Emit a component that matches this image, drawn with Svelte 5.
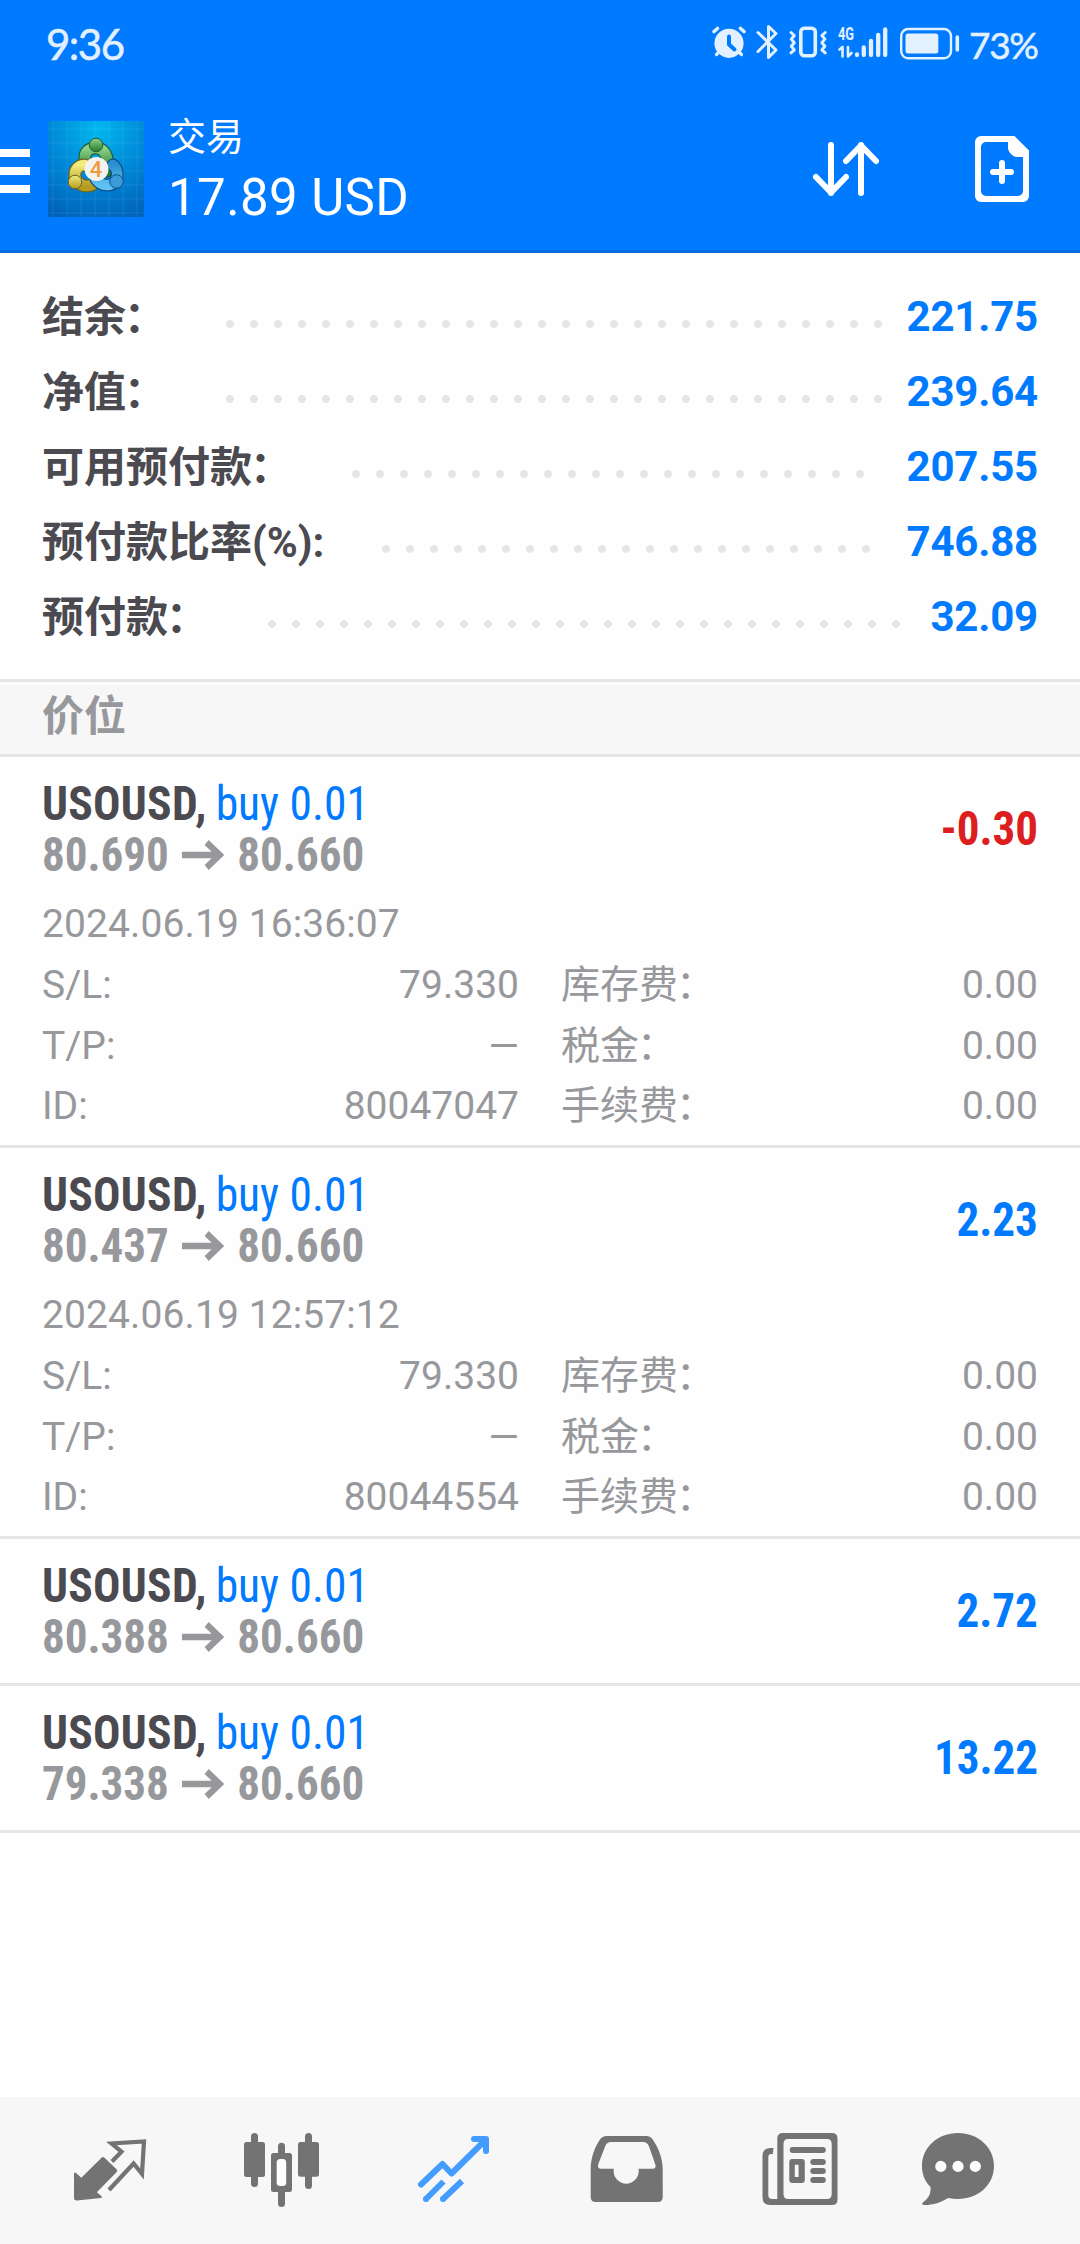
<script>
  const account = { title: "交易", total: "17.89 USD" };

  const summary = [
    { label: "结余", colon: "：", value: "221.75", dots: 28 },
    { label: "净值", colon: "：", value: "239.64", dots: 28 },
    { label: "可用预付款", colon: "：", value: "207.55", dots: 22 },
    { label: "预付款比率(%):", value: "746.88", dots: 21 },
    { label: "预付款", colon: "：", value: "32.09", dots: 27 },
  ];

  const positions = [
    {
      symbol: "USOUSD",
      side: "buy 0.01",
      open: "80.690",
      current: "80.660",
      profit: "-0.30",
      time: "2024.06.19 16:36:07",
      id: "80047047",
    },
    {
      symbol: "USOUSD",
      side: "buy 0.01",
      open: "80.437",
      current: "80.660",
      profit: "2.23",
      time: "2024.06.19 12:57:12",
      id: "80044554",
    },
    {
      symbol: "USOUSD",
      side: "buy 0.01",
      open: "80.388",
      current: "80.660",
      profit: "2.72",
    },
    {
      symbol: "USOUSD",
      side: "buy 0.01",
      open: "79.338",
      current: "80.660",
      profit: "13.22",
    },
  ];

  function details(position) {
    return [
      ["S/L:", "79.330", "库存费", "0.00"],
      ["T/P:", "—", "税金", "0.00"],
      ["ID:", position.id, "手续费", "0.00"],
    ];
  }
</script>

<main class="screen">
  <header class="header">
    <div class="status">
      <span class="clock">9:36</span>
      <svg class="status-icons" width="250" height="40" viewBox="711 24 250 40">
        <g fill="none" stroke="#e2f0ff" stroke-width="3.2" stroke-linecap="round" stroke-linejoin="round">
          <circle cx="729" cy="43.3" r="14.6" fill="#e2f0ff" stroke="none" />
          <path d="M714 31.5l3.500-3M744 31.5l-3.500-3" stroke-width="3.6" />
          <path d="M716.500 54.500l3-3M741.500 54.500l-3-3" />
          <path d="M729 36.500v8l5.500 5" stroke="#007aff" stroke-width="4" />
          <path d="M758 32.500l18 17.500-7.500 7.500v-31l7.500 7L758 51.500" stroke-width="3" />
          <rect x="800.800" y="28.200" width="14.500" height="27.600" rx="3.500" stroke-width="3.6" />
          <path d="M791 32.500l3.300 3-3 3.600 3 3.600-3 3.600 3 3.600-3.300 3M825.200 32.500l-3.300 3 3 3.600-3 3.600 3 3.600-3 3.600 3.300 3" stroke-width="3" />
          <path d="M839.500 49.500l3-2.500v9.500M848 47v9.500l3.500-3.500" stroke-width="2.600" />
          <path d="M857 54.500v.5M863.800 47.500v7.500M871 41v14M878.200 35v20M885.200 29.500v25.500" stroke-width="4.300" />
          <rect x="901.200" y="29" width="49.800" height="29.300" rx="7" stroke-width="2.400" />
          <rect x="905.500" y="33.500" width="32.800" height="20" rx="2.500" fill="#e2f0ff" stroke="none" />
          <path d="M957.300 37v13" stroke-width="3.600" />
        </g>
        <text class="network" x="838" y="40" textLength="16" lengthAdjust="spacingAndGlyphs">4G</text>
      </svg>
      <span class="battery">73%</span>
    </div>

    <div class="toolbar">
      <svg class="menu" width="30" height="44" viewBox="0 149 30 44" fill="#fff">
        <path d="M0 149h30v8H0zM0 167h30v8H0zM0 185h30v8H0z" />
      </svg>
      <svg class="logo" width="96" height="96" viewBox="0 0 96 96">
        <defs>
          <radialGradient id="sky" cx=".52" cy=".08" r="1">
            <stop offset="0" stop-color="#00b8ee" />
            <stop offset=".5" stop-color="#0088d8" />
            <stop offset="1" stop-color="#0062b8" />
          </radialGradient>
          <linearGradient id="green" x2="0" y2="1"><stop stop-color="#8fd28b" /><stop offset="1" stop-color="#237a2c" /></linearGradient>
          <linearGradient id="yellow" x2="0" y2="1"><stop stop-color="#f2ec7d" /><stop offset="1" stop-color="#b39c20" /></linearGradient>
          <linearGradient id="blue" x2="0" y2="1"><stop stop-color="#2c8fd0" /><stop offset="1" stop-color="#5ec3f2" /></linearGradient>
        </defs>
        <rect width="96" height="96" fill="url(#sky)" />
        <path d="M5 0v96M19 0v96M33 0v96M47 0v96M61 0v96M75 0v96M89 0v96M0 8h96M0 22h96M0 36h96M0 50h96M0 64h96M0 78h96M0 92h96" stroke="#8fd8ff" stroke-opacity=".13" />
        <g fill="none" stroke-linecap="round">
          <path d="M37 38C36 31 41 27 48 27s14 7 11 23" stroke="#1c5c35" stroke-width="13" />
          <path d="M37 38C36 31 41 27 48 27s14 7 11 23" stroke="url(#green)" stroke-width="10.5" />
          <path d="M37 44c-7 0-11 5-10 12 2 7 9 11 17 8" stroke="#6d621c" stroke-width="13" />
          <path d="M37 44c-7 0-11 5-10 12 2 7 9 11 17 8" stroke="url(#yellow)" stroke-width="10.5" />
          <path d="M65 44c5 4 5 10 3 15-4 7-14 7-20-1" stroke="#0b4f86" stroke-width="13" />
          <path d="M65 44c5 4 5 10 3 15-4 7-14 7-20-1" stroke="url(#blue)" stroke-width="10.5" />
        </g>
        <circle cx="48" cy="24" r="6.800" fill="url(#green)" stroke="#1c5c35" />
        <circle cx="27" cy="61" r="6.800" fill="url(#yellow)" stroke="#6d621c" />
        <circle cx="68.500" cy="60.500" r="6.800" fill="#3b9bd8" stroke="#0b4f86" />
        <circle cx="48.500" cy="48" r="12" fill="#f4f2f0" />
        <text class="logo-mark" x="48" y="56" text-anchor="middle">4</text>
      </svg>
      <div class="account">
        <div class="account-title">{account.title}</div>
        <div class="account-total">{account.total}</div>
      </div>
      <svg class="sort" width="68" height="68" viewBox="812 135 68 68" fill="none" stroke="#fff" stroke-width="6" stroke-linecap="round" stroke-linejoin="round">
        <path d="M831 145v48M816 177l15 15.500 15-15.500M861 193v-48M846 161l15-15.500 15 15.500" />
      </svg>
      <svg class="new-order" width="54" height="66" viewBox="975 136 54 66">
        <path
          fill="#fff"
          fill-rule="evenodd"
          d="M981 136h33.500L1029 150.500V196a6 6 0 0 1-6 6h-42a6 6 0 0 1-6-6v-54a6 6 0 0 1 6-6zM986 142a5 5 0 0 0-5 5v44a5 5 0 0 0 5 5h32a5 5 0 0 0 5-5v-34h-6c-4 0-9-5-9-9v-6z"
        />
        <path d="M993 172h18M1002 163v18" stroke="#fff" stroke-width="6" stroke-linecap="round" />
      </svg>
    </div>
  </header>

  <section class="summary">
    {#each summary as row}
      <div class="summary-row">
        <span class="summary-label">{row.label}{#if row.colon}<span class="colon">{row.colon}</span>{/if}</span>
        <span class="leader" style="width: {row.dots * 24}px"></span>
        <span class="summary-value">{row.value}</span>
      </div>
    {/each}
  </section>

  <h2 class="section-title">价位</h2>

  <section class="positions">
    {#each positions as position}
      <article class="position">
        <div class="overview">
          <div>
            <div class="line condensed">
              <b class="symbol">{position.symbol},</b> <span class="side">{position.side}</span>
            </div>
            <div class="line prices condensed">
              <span>{position.open}</span>
              <svg width="45" height="30" viewBox="0 0 45 30">
                <path d="M0 15h41M26.500 2.500L40.500 15l-14 12.500" fill="none" stroke="#97989c" stroke-width="6.500" />
              </svg>
              <span>{position.current}</span>
            </div>
          </div>
          <div class="profit condensed" class:loss={position.profit.startsWith("-")}>{position.profit}</div>
        </div>
        {#if position.time}
          <div class="time">{position.time}</div>
          <div class="details">
            {#each details(position) as [label, value, feeLabel, fee]}
              <span>{label}</span>
              <span class="number">{value}</span>
              <span class="fee">{feeLabel}<span class="colon">：</span></span>
              <span class="number">{fee}</span>
            {/each}
          </div>
        {/if}
      </article>
    {/each}
  </section>

  <nav class="tabs">
    <svg viewBox="70 2130 80 80">
      <path d="M74 2174q0-2.500 2-1l5.300 4.700 20.200-20q1.500-1.500 3 0l12 11.500q1.500 1.500 0 3l-19.700 20.100 4.800 4q1 1.500-.600 1.700l-24 2.500q-3 .300-3-2.500z" />
      <path d="M112 2161.500l9.500-9.800-10-8.200 32.500-2-2 32.500-8.400-10.500L109 2190" fill="none" stroke="#737373" stroke-width="4.200" />
    </svg>
    <svg viewBox="242 2130 80 80">
      <rect x="251" y="2133" width="7" height="54" rx="3.500" />
      <rect x="244" y="2142" width="21" height="35" rx="2.500" />
      <rect x="278" y="2142.700" width="7" height="64.300" rx="3.500" />
      <rect x="271" y="2153" width="21" height="39" rx="2.500" />
      <rect x="276.700" y="2159" width="9.500" height="27" rx="3.500" fill="#fdfdfd" />
      <rect x="305" y="2133" width="7" height="56" rx="3.500" />
      <rect x="298" y="2142" width="21" height="34.700" rx="2.500" />
    </svg>
    <svg viewBox="414 2130 80 80" fill="none" stroke="#459cff" stroke-width="6">
      <path d="M421 2184.500l21.500-20.500 9 9.500 34-33.500M474 2139h12v12" stroke-linecap="round" stroke-linejoin="round" />
      <path d="M425.500 2199.500l18-18M442.500 2199.500l19.500-18.500" />
      <path d="M426 2199h.010M443 2199h.010" stroke-linecap="round" />
    </svg>
    <svg viewBox="587 2130 80 80">
      <path
        fill-rule="evenodd"
        d="M606 2136h41q3 0 5 2.500c6 8 10.700 20 10.700 30v28.500q0 5-5 5h-62q-5 0-5-5v-28.500c0-10 4-22 10-30q2-2.500 5.300-2.500zM611 2142q-4 0-5.500 3.500l-7.200 18.500q-1.500 4.700 3 4.700h12.400v3c0 6 6 12 12.500 12s12.500-6 12.500-12v-3h14q3.500 0 2.800-3.700l-6.500-18.500q-1.500-4.500-6-4.500z"
      />
    </svg>
    <svg viewBox="760 2130 80 80">
      <path
        fill-rule="evenodd"
        d="M783 2133h49q5.500 0 5.500 5.500v61q0 5.500-5.500 5.500h-62q-7.500 0-7.500-8v-41q0-8 8-8h3l-.7 6h-1.500q-3 0-3 3v38q0 4 4 4h5v-60.500q0-5.500 5.700-5.500zM788 2139q-4.500 0-4.500 5v50q0 5 4.500 5h39q4.700 0 4.700-5v-50q0-5-4.700-5z"
      />
      <rect x="789.700" y="2147" width="36.100" height="6" rx="3" />
      <path fill-rule="evenodd" d="M792.300 2159h9.500q3 0 3 3v18q0 3-3 3h-9.500q-3 0-3-3v-18q0-3 3-3zM794.800 2164.700V2177h3.800v-12.300z" />
      <rect x="810.300" y="2159" width="15.500" height="6" rx="3" />
      <rect x="810.300" y="2168" width="15.500" height="6" rx="3" />
      <rect x="810.300" y="2177" width="15.500" height="6" rx="3" />
    </svg>
    <svg viewBox="918 2130 80 80">
      <path d="M958 2133c20 0 36 14 36 33s-16 33-36 33q-5 0-10-1c-7 4.500-15 7-23.500 7-2.500 0-3-1.500-1-3 6-4.500 7.500-9 7-15-6-6-8.500-13-8.500-21 0-19 16-33 36-33z" />
      <g fill="#fdfdfd">
        <circle cx="940.800" cy="2166.400" r="5.600" />
        <circle cx="958" cy="2166.400" r="5.600" />
        <circle cx="975.300" cy="2166.400" r="5.600" />
      </g>
    </svg>
  </nav>
</main>

<style>
  :global(body) {
    margin: 0;
    background: #fff;
  }

  .screen {
    box-sizing: border-box;
    width: 1080px;
    height: 2244px;
    display: flex;
    flex-direction: column;
    background: #fefefe;
    font-family: Roboto, "Noto Sans CJK SC", sans-serif;
    overflow: hidden;
  }

  .header {
    box-sizing: border-box;
    height: 253px;
    flex: none;
    background: #007aff;
    border-bottom: 3px solid #006cdf;
    color: #fff;
  }

  .status {
    display: flex;
    height: 97px;
    box-sizing: border-box;
    padding: 24px 0 0 46px;
    color: #e2f0ff;
    font-family: Lato, "Noto Sans CJK SC", sans-serif;
    line-height: 41px;
    -webkit-text-stroke: 0.5px #e2f0ff;
  }

  .clock {
    width: 665px;
    font-size: 42px;
    letter-spacing: -1.5px;
  }

  .status-icons {
    flex: none;
  }

  .network {
    fill: #e2f0ff;
    stroke: none;
    font: bold 18px Roboto, sans-serif;
    -webkit-text-stroke: 0;
  }

  .battery {
    margin-left: 8px;
    font-size: 37px;
    letter-spacing: -1.3px;
  }

  .toolbar {
    display: flex;
    align-items: center;
    height: 144px;
  }

  .menu {
    margin-top: 4px;
  }

  .logo {
    margin-left: 18px;
  }

  .logo-mark {
    font: 500 22px Roboto, sans-serif;
    fill: #f09a3e;
  }

  .account {
    margin-left: 24px;
    width: 644px;
  }

  .account-title {
    font-size: 38px;
    line-height: 50px;
  }

  .account-total {
    font-size: 51px;
    line-height: 60px;
    letter-spacing: 0.4px;
    padding-top: 6px;
    margin-bottom: -2px;
  }

  .sort {
    flex: none;
  }

  .new-order {
    flex: none;
    margin-left: 95px;
  }

  .summary {
    box-sizing: border-box;
    height: 426px;
    flex: none;
    padding: 26px 42px 0;
  }

  .summary-row {
    display: flex;
    height: 75px;
    line-height: 75px;
    font-size: 42px;
    font-weight: 700;
  }

  .summary-label {
    padding-top: 1px;
    color: #4b4a50;
  }

  .colon {
    margin: 0 2px 0 -2px;
  }

  .leader {
    flex: none;
    height: 8px;
    margin: 41px 0 0 50px;
    background: radial-gradient(circle, #e5e5e5 3.5px, transparent 4.2px) 0 0 / 24px 8px repeat-x;
  }

  .summary-value {
    margin-left: auto;
    letter-spacing: -0.2px;
    color: #007aff;
  }

  .section-title {
    box-sizing: border-box;
    height: 78px;
    flex: none;
    margin: 0;
    padding-left: 42px;
    border: solid #e5e5e5;
    border-width: 3px 0;
    box-shadow: inset 0 3px #fff;
    background: #f7f7f7;
    color: #97989c;
    font-size: 42px;
    line-height: 69px;
  }

  .positions {
    flex: 1;
  }

  .position {
    border-bottom: 3px solid #e5e5e5;
    color: #97989c;
  }

  .overview {
    display: flex;
    justify-content: space-between;
    height: 144px;
    padding: 0 42px;
  }

  .condensed {
    font-family: "Roboto Condensed", Roboto, sans-serif;
    font-stretch: 75%;
    font-size: 48px;
    transform: scaleX(0.938);
    transform-origin: left;
  }

  .line {
    height: 51px;
    line-height: 51px;
    white-space: nowrap;
  }

  .line:first-child {
    margin-top: 21px;
    transform: scaleX(0.948);
  }

  .symbol {
    letter-spacing: 0.3px;
    color: #4b4a50;
  }

  .side {
    margin-left: -1.5px;
    color: #007aff;
  }

  .prices {
    display: flex;
    align-items: center;
    gap: 14px;
    font-weight: 700;
  }

  .profit {
    line-height: 144px;
    font-weight: 700;
    color: #007aff;
    transform-origin: right;
  }

  .loss {
    color: #dc1e1e;
  }

  .time {
    padding: 0 42px;
    height: 46px;
    font-size: 39px;
    letter-spacing: 0.1px;
    line-height: 46px;
  }

  .details {
    display: grid;
    grid-template-columns: 237px 240px 237px 282px;
    grid-auto-rows: 60.500px;
    box-sizing: border-box;
    height: 198px;
    padding: 8px 42px 0;
    font-size: 39px;
    line-height: 60px;
  }

  .fee {
    padding-left: 42px;
  }

  .number {
    text-align: right;
  }

  .tabs {
    box-sizing: border-box;
    flex: none;
    display: grid;
    grid-template-columns: 172px 172px 173px 173px 158px 80px;
    height: 147px;
    padding: 33px 0 0 70px;
    background: #f7f7f7;
  }

  .tabs svg {
    width: 80px;
    height: 80px;
  }

  .tabs svg:not([fill]) {
    fill: #737373;
  }
</style>
